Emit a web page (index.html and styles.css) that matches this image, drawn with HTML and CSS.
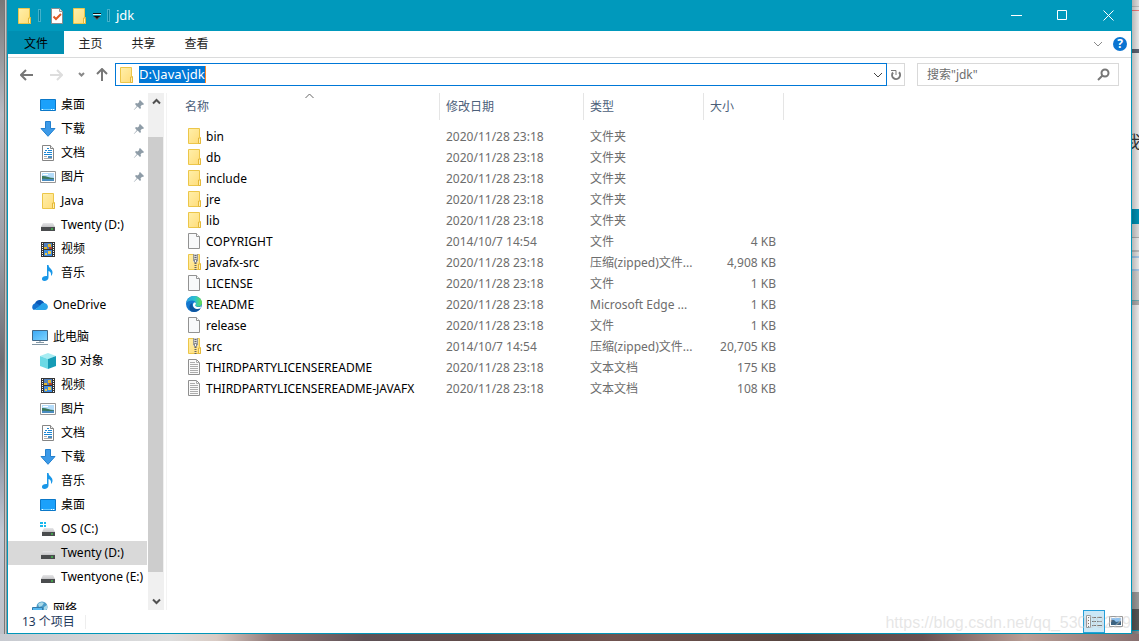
FILE: index.html
```html
<!DOCTYPE html>
<html lang="zh-CN">
<head>
<meta charset="utf-8">
<title>jdk</title>
<link rel="stylesheet" href="styles.css">
</head>
<body>
<svg class="sprite" aria-hidden="true">
  <defs>
    <linearGradient id="g-folder" x1="0" y1="0" x2="1" y2="1"><stop offset="0" stop-color="#ffefaa"/><stop offset="1" stop-color="#ffdc78"/></linearGradient>
    <linearGradient id="g-edge" x1="0" y1="0" x2="1" y2="0"><stop offset="0" stop-color="#2c9fe0"/><stop offset=".55" stop-color="#2bc2cf"/><stop offset="1" stop-color="#6be04a"/></linearGradient>
    <linearGradient id="g-screen" x1="0" y1="0" x2="1" y2="1"><stop offset="0" stop-color="#3aa8f5"/><stop offset="1" stop-color="#7fd4ff"/></linearGradient>
    <linearGradient id="g-disk" x1="0" y1="0" x2="0" y2="1"><stop offset="0" stop-color="#e6e6e8"/><stop offset="1" stop-color="#c4c4c6"/></linearGradient>
    <symbol id="folder" viewBox="0 0 16 16"><path d="M2.5.5h11v9h1v6h-12z" fill="url(#g-folder)" stroke="#ecc649"/><path d="M12.5 15.500v-5.500h2v5.500z" fill="#fff0b0" stroke="#e4b83a"/></symbol>
    <symbol id="file" viewBox="0 0 16 16"><path d="M2.500.500h8l3 3v12h-11z" fill="#f8f9fa" stroke="#929292"/><path d="M10.500.500v3h3" fill="#fff" stroke="#929292"/></symbol>
    <symbol id="text" viewBox="0 0 16 16"><path d="M2.500.500h8l3 3v12h-11z" fill="#fafafa" stroke="#8f8f8f"/><path d="M10.500.500v3h3M4 3.500h5M4 5.500h8M4 7.500h8M4 9.500h8M4 11.500h8M4 13.500h8" fill="none" stroke="#acacac"/></symbol>
    <symbol id="zip" viewBox="0 0 16 16"><path d="M2.500.500h11v9h1v6h-12z" fill="url(#g-folder)" stroke="#ecc649"/><path d="M12.500 10v5.500h2V10z" fill="#fff0b0" stroke="#e4b83a"/><path d="M7 0h5v8H7z" fill="#d2d2d2"/><path d="M7.500 0v7M11.500 0v7" stroke="#999"/><path d="M9.500 1v15" stroke="#666" stroke-width="2" stroke-dasharray="1 1"/><path d="M8.500 5.500h2v3h-2z" fill="#f5f5f5" stroke="#888"/></symbol>
    <symbol id="edge" viewBox="0 0 16 16"><circle cx="8" cy="8" r="8" fill="#1477cf"/><path d="M.3 7C1 2.600 4.300 0 8 0c4.700 0 8 3.200 8 6.800 0 2.700-2 4-4.200 4-1.600 0-2.900-.6-2.900-1.200s1-.9 1-2.200C9.900 5.700 8.300 4.500 6 4.500 3.500 4.500 1.200 5.700.3 7z" fill="url(#g-edge)"/><path d="M6.200 7c-.9 3.400 1.900 6.600 8.300 5.500-2 3-5.700 4.200-9 3C2.500 13.500 2.800 8.300 6.200 7z" fill="#0f559f"/><path d="M8 6.500c2.500-.3 2.100 1.500 1 3 .7 1.500 3.600 2.200 6.200.7l-.7 2c-1.500.8-3.200 1-4.500.6C7.300 12 5.800 8.800 8 6.500z" fill="#fff"/></symbol>
    <symbol id="desktop" viewBox="0 0 16 16"><path d="M.5 2.500h15v11H.5z" fill="#1ba1fb" stroke="#0b78c8"/><path d="M1 12.500h14" stroke="#65c8ff"/><path d="M2 12.500h1M11 12.500h1M13 12.500h1" stroke="#fff"/></symbol>
    <symbol id="download" viewBox="0 0 16 16"><path d="M5.500.500h5v7h4.500L8 15.300 1 7.500h4.500z" fill="#3c9ae8" stroke="#2380cf"/></symbol>
    <symbol id="document" viewBox="0 0 16 16"><path d="M2.500.500h8l3 3v12h-11z" fill="#fff" stroke="#858585"/><path d="M10.500.500v3h3" fill="#eee" stroke="#858585"/><path d="M7 3.500h2M5 5.500h2M8 5.500h4M4 7.500h2M7 7.500h5M4 9.500h8" stroke="#1a86d4"/><path d="M4 11.500h3M4 13.500h8" stroke="#aaa"/><path d="M8 11h4v2H8z" fill="#4a8cc0"/></symbol>
    <symbol id="picture" viewBox="0 0 16 16"><path d="M.5 2.500h15v11H.5z" fill="#fff" stroke="#969696"/><path d="M2 4h12v8H2z" fill="#b4dcfa"/><path d="M2 7c4-.5 7 2 12 2v2H2z" fill="#3c795d"/><path d="M2 10c4-1 7 1 12-.5V12H2z" fill="#4a8cc0"/><path d="M3 5.500h5" stroke="#fff"/></symbol>
    <symbol id="disk" viewBox="0 0 16 16"><path d="M3 6h10l2 4H1z" fill="url(#g-disk)"/><path d="M1 10h14v4H1z" fill="#4a4c4e"/><path d="M11 12h2" stroke="#3cf24a"/></symbol>
    <symbol id="osdisk" viewBox="0 0 16 16"><path d="M4 7h9l2 4H2z" fill="url(#g-disk)"/><path d="M2 11h13v4H2z" fill="#4a4c4e"/><path d="M11 13h2" stroke="#3cf24a"/><path d="M0 1h3v2H0zM4 1h2v2H4zM0 4h3v2H0zM4 4h2v2H4z" fill="#18b8ed"/></symbol>
    <symbol id="video" viewBox="0 0 16 16"><path d="M1 1h14v15H1z" fill="#343434"/><path d="M2.500 2v13M13.500 2v13" stroke="#fff" stroke-dasharray="1 1"/><path d="M4 2h8v6H4z" fill="#4f80bf"/><path d="M4 9h8v6H4z" fill="#3f8de0"/><path d="M4 6h3v2H4zM8 3h3v3H8z" fill="#e2b72f"/><path d="M9 6h3v2H9z" fill="#ad4435"/><path d="M5 12h2v2H5zM8 10h3v3H8z" fill="#f0ca48"/></symbol>
    <symbol id="music" viewBox="0 0 16 16"><path d="M7 0h1.500c.3 3.500 4.500 4 4 8-.2 1.500-1 2.500-1.500 3 .5-3-.8-4.500-2.500-5v6.500C8.500 14.500 6.500 16 4.500 16S1.800 14.900 2 13.500C2.200 12 4 10.700 7 11z" fill="#1997e8"/></symbol>
    <symbol id="onedrive" viewBox="0 0 16 16"><path d="M3 6.500C4 3 8.500 1.500 11.500 5L13 7l-5 4-6-2z" fill="#0a57b5"/><path d="M.3 11C-.2 8 2 6 4.500 6.300L9 9l-7 4C1.200 12.800.5 12 .3 11z" fill="#1473cf"/><path d="M8.500 8C10 5 15 5.500 15.800 9c.5 2-.8 4-2.800 4H2.500z" fill="#2ba5ea"/></symbol>
    <symbol id="pc" viewBox="0 0 16 16"><path d="M.5 1.500h15v10H.5z" fill="url(#g-screen)" stroke="#436887"/><path d="M7 12h2v2H7z" fill="#bbc8d0"/><path d="M4 13.500h8M0 15.500h16" stroke="#8497a5"/></symbol>
    <symbol id="cube" viewBox="0 0 16 16"><path d="M0 3l8-3 8 3-8 3z" fill="#a7edf3"/><path d="M16 3L8 6v10l8-3z" fill="#159bb5"/><path d="M0 3l8 3v10l-8-3z" fill="#6bd9e5"/></symbol>
    <symbol id="network" viewBox="0 0 16 16"><circle cx="10" cy="6" r="5.500" fill="#4a9cc8"/><path d="M6 3q3-3 6-1l-2 3-3 1zM12 6l3-2v4l-3 2z" fill="#a8d8e8"/><path d="M.5 6.500h10v6H.5z" fill="#55b8f0" stroke="#347aa8"/></symbol>
    <symbol id="pin" viewBox="0 0 12 12"><path d="M7 1l4 4-1 1-1-.3L7.500 7.500 8 9l-1 1-2.400-2.400L1 11 .8 10.800l3-3.600L2 5l1-1 1.500.5L6.300 3 6 2z" fill="#8e9ca7"/></symbol>
  </defs>
</svg>
<aside class="backdrop-left" aria-hidden="true"></aside>
<main class="window">
  <header class="titlebar">
    <svg class="icon"><use href="#folder"/></svg>
    <i class="tick"></i>
    <button class="quick" aria-label="属性"><svg class="icon" viewBox="0 0 16 16"><path d="M2.500.500h8l3 3v12h-11z" fill="#fff" stroke="#8d8d8d"/><path d="M10.500.500v3h3" fill="#eee" stroke="#999"/><path d="M4.500 8.500l2.500 2.500 5-5" fill="none" stroke="#e05a25" stroke-width="2"/></svg></button>
    <button class="quick" aria-label="新建文件夹"><svg class="icon"><use href="#folder"/></svg></button>
    <button class="quick narrow" aria-label="自定义快速访问工具栏"><svg width="8" height="8" viewBox="0 0 8 8"><path d="M0 1.500h8" stroke="#111"/><path d="M0 2.500h8" stroke="#dff3f7"/><path d="M0 4h8L4 8z" fill="#111"/><path d="M1 4.500L4 7.500l3-3" fill="none" stroke="#dff3f7" stroke-width=".5"/></svg></button>
    <i class="tick"></i>
    <h1>jdk</h1>
    <div class="controls">
      <button aria-label="最小化"><svg width="11" height="11" viewBox="0 0 11 11"><path d="M0 5.500h11"/></svg></button>
      <button aria-label="最大化"><svg width="11" height="11" viewBox="0 0 11 11"><path d="M.5.500h9v9h-9z"/></svg></button>
      <button aria-label="关闭"><svg width="11" height="11" viewBox="0 0 11 11"><path d="M.5.500l10 10M10.500.500l-10 10"/></svg></button>
    </div>
  </header>
  <nav class="tabs">
    <button class="file-tab">文件</button><button>主页</button><button>共享</button><button>查看</button>
    <div class="tab-tools">
      <button aria-label="展开功能区"><svg class="line" width="10" height="10" viewBox="0 0 10 10"><path d="M1 3l4 4 4-4" stroke="#8a8a8a"/></svg></button>
      <button class="help" aria-label="帮助">?</button>
    </div>
  </nav>
  <div class="addressbar">
    <div class="history">
      <button aria-label="后退"><svg class="line thick" width="13" height="12" viewBox="0 0 13 12"><path d="M6 1L1 6l5 5M1 6h12" stroke="#777"/></svg></button>
      <button aria-label="前进"><svg class="line thick" width="13" height="12" viewBox="0 0 13 12"><path d="M7 1l5 5-5 5M12 6H0" stroke="#ddd"/></svg></button>
      <button aria-label="最近位置"><svg class="line thick" width="7" height="6" viewBox="0 0 7 6"><path d="M1 1l2.500 2.500L6 1" stroke="#888"/></svg></button>
      <button aria-label="上移"><svg class="line thick" width="12" height="13" viewBox="0 0 12 13"><path d="M1 6l5-5 5 5M6 1v12" stroke="#777"/></svg></button>
    </div>
    <div class="address">
      <svg class="icon"><use href="#folder"/></svg>
      <input class="path" aria-label="地址" value="D:\Java\jdk">
      <button aria-label="以前的位置"><svg class="line" width="10" height="8" viewBox="0 0 10 8"><path d="M1 2l4 4 4-4" stroke="#444"/></svg></button>
    </div>
    <button class="refresh" aria-label="刷新"><svg class="line" width="12" height="12" viewBox="0 0 12 12"><path d="M3 3.500a4 4 0 1 0 6-.2" stroke="#7a7a7a" stroke-width="2"/><path d="M1 1.500h5v4.500" stroke="#7a7a7a"/></svg></button>
    <label class="search"><input aria-label="搜索" placeholder='搜索"jdk"'><svg class="line" width="13" height="13" viewBox="0 0 13 13"><circle cx="8" cy="5" r="3.500" stroke="#777" stroke-width="2"/><path d="M5.500 7.500L1 12" stroke="#777" stroke-width="2"/></svg></label>
  </div>
  <div class="content">
    <nav class="tree" aria-label="导航窗格">
      <ul>
        <li><a href="#"><svg class="icon"><use href="#desktop"/></svg>桌面<svg class="pin"><use href="#pin"/></svg></a></li>
        <li><a href="#"><svg class="icon"><use href="#download"/></svg>下载<svg class="pin"><use href="#pin"/></svg></a></li>
        <li><a href="#"><svg class="icon"><use href="#document"/></svg>文档<svg class="pin"><use href="#pin"/></svg></a></li>
        <li><a href="#"><svg class="icon"><use href="#picture"/></svg>图片<svg class="pin"><use href="#pin"/></svg></a></li>
        <li><a href="#"><svg class="icon"><use href="#folder"/></svg>Java</a></li>
        <li><a href="#"><svg class="icon"><use href="#disk"/></svg>Twenty (D:)</a></li>
        <li><a href="#"><svg class="icon"><use href="#video"/></svg>视频</a></li>
        <li><a href="#"><svg class="icon"><use href="#music"/></svg>音乐</a></li>
        <li class="root"><a href="#"><svg class="icon"><use href="#onedrive"/></svg>OneDrive</a></li>
        <li class="root"><a href="#"><svg class="icon"><use href="#pc"/></svg>此电脑</a></li>
        <li><a href="#"><svg class="icon"><use href="#cube"/></svg>3D 对象</a></li>
        <li><a href="#"><svg class="icon"><use href="#video"/></svg>视频</a></li>
        <li><a href="#"><svg class="icon"><use href="#picture"/></svg>图片</a></li>
        <li><a href="#"><svg class="icon"><use href="#document"/></svg>文档</a></li>
        <li><a href="#"><svg class="icon"><use href="#download"/></svg>下载</a></li>
        <li><a href="#"><svg class="icon"><use href="#music"/></svg>音乐</a></li>
        <li><a href="#"><svg class="icon"><use href="#desktop"/></svg>桌面</a></li>
        <li><a href="#"><svg class="icon"><use href="#osdisk"/></svg>OS (C:)</a></li>
        <li class="selected"><a href="#"><svg class="icon"><use href="#disk"/></svg>Twenty (D:)</a></li>
        <li><a href="#"><svg class="icon"><use href="#disk"/></svg>Twentyone (E:)</a></li>
        <li class="root"><a href="#"><svg class="icon"><use href="#network"/></svg>网络</a></li>
      </ul>
    </nav>
    <div class="scrollbar">
      <button aria-label="向上滚动"><svg class="line thick" width="9" height="7" viewBox="0 0 9 7"><path d="M1 5.500L4.500 2 8 5.500" stroke="#505050"/></svg></button>
      <div class="track"><div class="thumb"></div></div>
      <button aria-label="向下滚动"><svg class="line thick" width="9" height="7" viewBox="0 0 9 7"><path d="M1 1.500L4.500 5 8 1.500" stroke="#505050"/></svg></button>
    </div>
    <section class="files">
      <table>
        <colgroup><col class="c-name"><col class="c-date"><col class="c-type"><col class="c-size"></colgroup>
        <thead><tr><th>名称<svg class="line sort" width="9" height="6" viewBox="0 0 9 6"><path d="M.5 5l4-4 4 4" stroke="#666"/></svg></th><th>修改日期</th><th>类型</th><th>大小</th></tr></thead>
        <tbody>
          <tr><td><a href="#"><svg class="icon"><use href="#folder"/></svg>bin</a></td><td>2020/11/28 23:18</td><td>文件夹</td><td></td></tr>
          <tr><td><a href="#"><svg class="icon"><use href="#folder"/></svg>db</a></td><td>2020/11/28 23:18</td><td>文件夹</td><td></td></tr>
          <tr><td><a href="#"><svg class="icon"><use href="#folder"/></svg>include</a></td><td>2020/11/28 23:18</td><td>文件夹</td><td></td></tr>
          <tr><td><a href="#"><svg class="icon"><use href="#folder"/></svg>jre</a></td><td>2020/11/28 23:18</td><td>文件夹</td><td></td></tr>
          <tr><td><a href="#"><svg class="icon"><use href="#folder"/></svg>lib</a></td><td>2020/11/28 23:18</td><td>文件夹</td><td></td></tr>
          <tr><td><a href="#"><svg class="icon"><use href="#file"/></svg>COPYRIGHT</a></td><td>2014/10/7 14:54</td><td>文件</td><td>4 KB</td></tr>
          <tr><td><a href="#"><svg class="icon"><use href="#zip"/></svg>javafx-src</a></td><td>2020/11/28 23:18</td><td>压缩(zipped)文件...</td><td>4,908 KB</td></tr>
          <tr><td><a href="#"><svg class="icon"><use href="#file"/></svg>LICENSE</a></td><td>2020/11/28 23:18</td><td>文件</td><td>1 KB</td></tr>
          <tr><td><a href="#"><svg class="icon"><use href="#edge"/></svg>README</a></td><td>2020/11/28 23:18</td><td>Microsoft Edge ...</td><td>1 KB</td></tr>
          <tr><td><a href="#"><svg class="icon"><use href="#file"/></svg>release</a></td><td>2020/11/28 23:18</td><td>文件</td><td>1 KB</td></tr>
          <tr><td><a href="#"><svg class="icon"><use href="#zip"/></svg>src</a></td><td>2014/10/7 14:54</td><td>压缩(zipped)文件...</td><td>20,705 KB</td></tr>
          <tr><td><a href="#"><svg class="icon"><use href="#text"/></svg>THIRDPARTYLICENSEREADME</a></td><td>2020/11/28 23:18</td><td>文本文档</td><td>175 KB</td></tr>
          <tr><td><a href="#"><svg class="icon"><use href="#text"/></svg>THIRDPARTYLICENSEREADME-JAVAFX</a></td><td>2020/11/28 23:18</td><td>文本文档</td><td>108 KB</td></tr>
        </tbody>
      </table>
    </section>
  </div>
  <footer class="status">
    <span class="count">13 个项目</span>
    <div class="views">
      <button class="active" aria-label="详细信息"><svg width="16" height="14" viewBox="0 0 16 14"><path d="M.5.500h4v12h-4z" fill="#fff" stroke="#999"/><path d="M2 2.500h1M2 5.500h1M2 8.500h1M2 11.500h1" stroke="#444"/><path d="M6 2.500h4M11 2.500h5M6 6.500h4M11 6.500h5M6 10.500h4M11 10.500h5" stroke="#777"/></svg></button>
      <button aria-label="大图标"><svg width="14" height="12" viewBox="0 0 14 12"><path d="M.5.500h13v10H.5z" fill="#fff" stroke="#999"/><path d="M2 2h10v7H2z" fill="#8fc2f0"/><path d="M2 4q3-1 5 2l5-1v4H2z" fill="#3c6380"/></svg></button>
    </div>
  </footer>
</main>
<aside class="backdrop-right" aria-hidden="true"><span>我</span></aside>
<div class="backdrop-bottom" aria-hidden="true"></div>
<div class="watermark">https://blog.csdn.net/qq_53008229</div>
</body>
</html>
```
FILE: styles.css
```css
* { box-sizing: border-box; }
body {
  margin: 0;
  height: 100vh;
  overflow: hidden;
  display: grid;
  grid-template: minmax(0, 1fr) 7px / 7px minmax(0, 1fr) 7px;
  position: relative;
  font: 12px/20px "Noto Sans", "Noto Sans CJK SC", sans-serif;
  color: #000;
}
button {
  margin: 0;
  padding: 0;
  border: 0;
  background: none;
  color: inherit;
  font: inherit;
  display: flex;
  align-items: center;
  justify-content: center;
}
input { font: inherit; border: 0; padding: 0; outline: 0; min-width: 0; background: none; }
a { color: inherit; text-decoration: none; }
svg { flex: none; display: block; }
.sprite { position: absolute; width: 0; height: 0; }
.icon { width: 16px; height: 16px; }
.line { fill: none; }
.thick { stroke-width: 2px; }

.backdrop-left {
  background:
    linear-gradient(90deg, transparent 4px, #777 4px 5px, #c9c5c1 5px 6px, #8f9499 6px),
    linear-gradient(#777 0, #b9bbc4 18%, #999da6 40%, #6c6d74 57%, #8990a0 70%, #c2c9d5 84%, #bfc2c9);
}
.backdrop-right {
  position: relative;
  overflow: hidden;
  background:
    linear-gradient(90deg, rgba(0, 0, 0, .2), transparent),
    linear-gradient(#ddd 0 6px, #bbb 6px 7px, #e2e2e2 7px 10px, #f07878 10px 11px, #e6e6e6 11px 49px, #5b6170 49px 53px, #e8e8e8 53px 209px, #008fb2 209px 224px, #d8d8d8 224px 237px, #aaa 237px 238px, #e5e5e5 238px 250px, #b8b8b8 250px 252px, #ddd 252px 256px, #a3c4e4 256px 258px, #e5e5e5 258px 269px, #a3c4e4 269px 271px, #cfcfcf 271px 300px, #6caab0 300px 301px, #aaa 301px 305px, #e8e8e8 305px 592px, #999 592px 609px, #555 609px 630px, #0096ba 630px 631px, #888 631px);
}
.backdrop-right span { position: absolute; top: 132px; left: -8px; font-size: 17px; color: #333; }
.backdrop-bottom {
  grid-column: 1 / -1;
  background: linear-gradient(90deg, #c7cad0 0, #ddd 15%, #d9cbc4 19%, #8f7776 24%, #5e5156 32%, #614b49 42%, #705450 54%, #56443f 70%, #695152 81%, #b99e96 90%, #876f6f);
}
.window {
  display: flex;
  flex-direction: column;
  min-width: 0;
  background: #fff;
  border: 1px solid #0096b8;
  border-top: 0;
}

.titlebar { height: 31px; flex: none; display: flex; align-items: center; background: #0099bc; color: #fff; padding-left: 8px; }
.tick { width: 3px; height: 13px; margin: 0 8px 0 6px; border: 1px solid #43b2cb; background: #007f9e; }
.quick { margin-right: 6px; }
.quick.narrow { width: 8px; margin-right: 0; }
.titlebar .narrow + .tick { margin-right: 6px; }
.titlebar h1 { margin: 0; font-size: 13px; font-weight: 400; line-height: 18px; padding-bottom: 2px; }
.controls { display: flex; margin-left: auto; }
.controls button { width: 46px; height: 31px; }
.controls svg { fill: none; stroke: #fff; }

.tabs { height: 27px; flex: none; display: flex; align-items: flex-start; border-bottom: 1px solid #dadbdc; color: #222; }
.tabs > button { width: 53px; height: 23px; padding-top: 2px; }
.tabs > .file-tab { width: 56px; background: #008fb2; color: #000; }
.tab-tools { display: flex; align-items: center; gap: 10px; margin: 6px 4px 0 auto; }
.help { width: 14px; height: 14px; border-radius: 50%; background: #0b74d1; color: #fff; font-size: 12px; font-weight: 700; line-height: 14px; }

.addressbar { height: 35px; flex: none; display: flex; align-items: center; padding: 0 12px 2px; }
.history { display: flex; align-items: center; gap: 15px; width: 95px; }
.history button:nth-child(2) { margin-left: 2px; }
.history button:nth-child(4) { margin-left: -4px; }
.address { height: 23px; flex: 1; display: flex; align-items: center; border: 1px solid #0078d7; padding: 0 3px 0 2px; }
.path { field-sizing: content; height: 17px; margin-left: 5px; background: #0078d7; color: #fff; border-right: 1px solid #ff8728; font-size: 13px; line-height: 17px; }
.address button { margin-left: auto; }
.refresh { width: 18px; height: 23px; border: 1px solid #d9d9d9; border-left: 0; }
.search { width: 202px; height: 23px; margin-left: 12px; padding: 0 8px 0 9px; display: flex; align-items: center; border: 1px solid #d9d9d9; }
.search input { flex: 1; }
.search input::placeholder { color: #6d6d6d; opacity: 1; }

.content { flex: 1; min-height: 0; display: flex; }
.tree { width: 139px; overflow: hidden; }
.tree ul { list-style: none; margin: 0; padding: 0; }
.tree a { height: 24px; display: flex; align-items: center; gap: 5px; padding-left: 32px; white-space: nowrap; line-height: 24px; }
.tree .root { margin-top: 8px; }
.tree .root a { padding-left: 24px; }
.tree .selected { background: #d9d9d9; }
.pin { width: 12px; height: 12px; margin: 0 2px 0 auto; }
.scrollbar { width: 16px; margin-left: 1px; display: flex; flex-direction: column; background: #f0f0f0; }
.scrollbar button { height: 17px; }
.track { flex: 1; padding: 27px 1px 21px 0; }
.thumb { height: 100%; background: #cdcdcd; }

.files { flex: 1; min-width: 0; margin-left: 2px; border-left: 1px solid #f3f3f3; overflow: hidden; }
table { table-layout: fixed; width: 617px; border-collapse: separate; border-spacing: 0; color: #6d6d6d; }
.c-name { width: 273px; }
.c-date { width: 144px; }
.c-type { width: 120px; }
.c-size { width: 80px; }
th { height: 27px; padding: 0 6px; border-right: 1px solid #e5e5e5; text-align: left; font-weight: 400; color: #4c607a; position: relative; }
th:first-child { padding-left: 18px; }
.sort { position: absolute; top: 0; left: calc(50% + 2px); }
tbody::before { content: ""; display: block; height: 6px; }
td { height: 21px; padding: 1px 6px 0; white-space: nowrap; vertical-align: top; }
td:first-child { padding-left: 19px; color: #000; }
td:last-child { text-align: right; padding-right: 8px; }
td a { display: flex; align-items: flex-start; gap: 4px; }
td .icon { margin-top: 1px; }

.status { height: 23px; flex: none; display: flex; align-items: center; padding-left: 14px; color: #1e395b; }
.count { padding-right: 10px; border-right: 1px solid #eee; line-height: 14px; }
.views { display: flex; margin-left: auto; padding-right: 4px; }
.views button { width: 22px; height: 23px; }
.views .active { border: 1px solid #26a0da; background: #cbe8f6; }
.watermark { position: absolute; right: 8px; bottom: 8px; font: 16px/20px "Liberation Sans", Arial, sans-serif; color: rgba(205, 205, 205, .5); pointer-events: none; }
```
